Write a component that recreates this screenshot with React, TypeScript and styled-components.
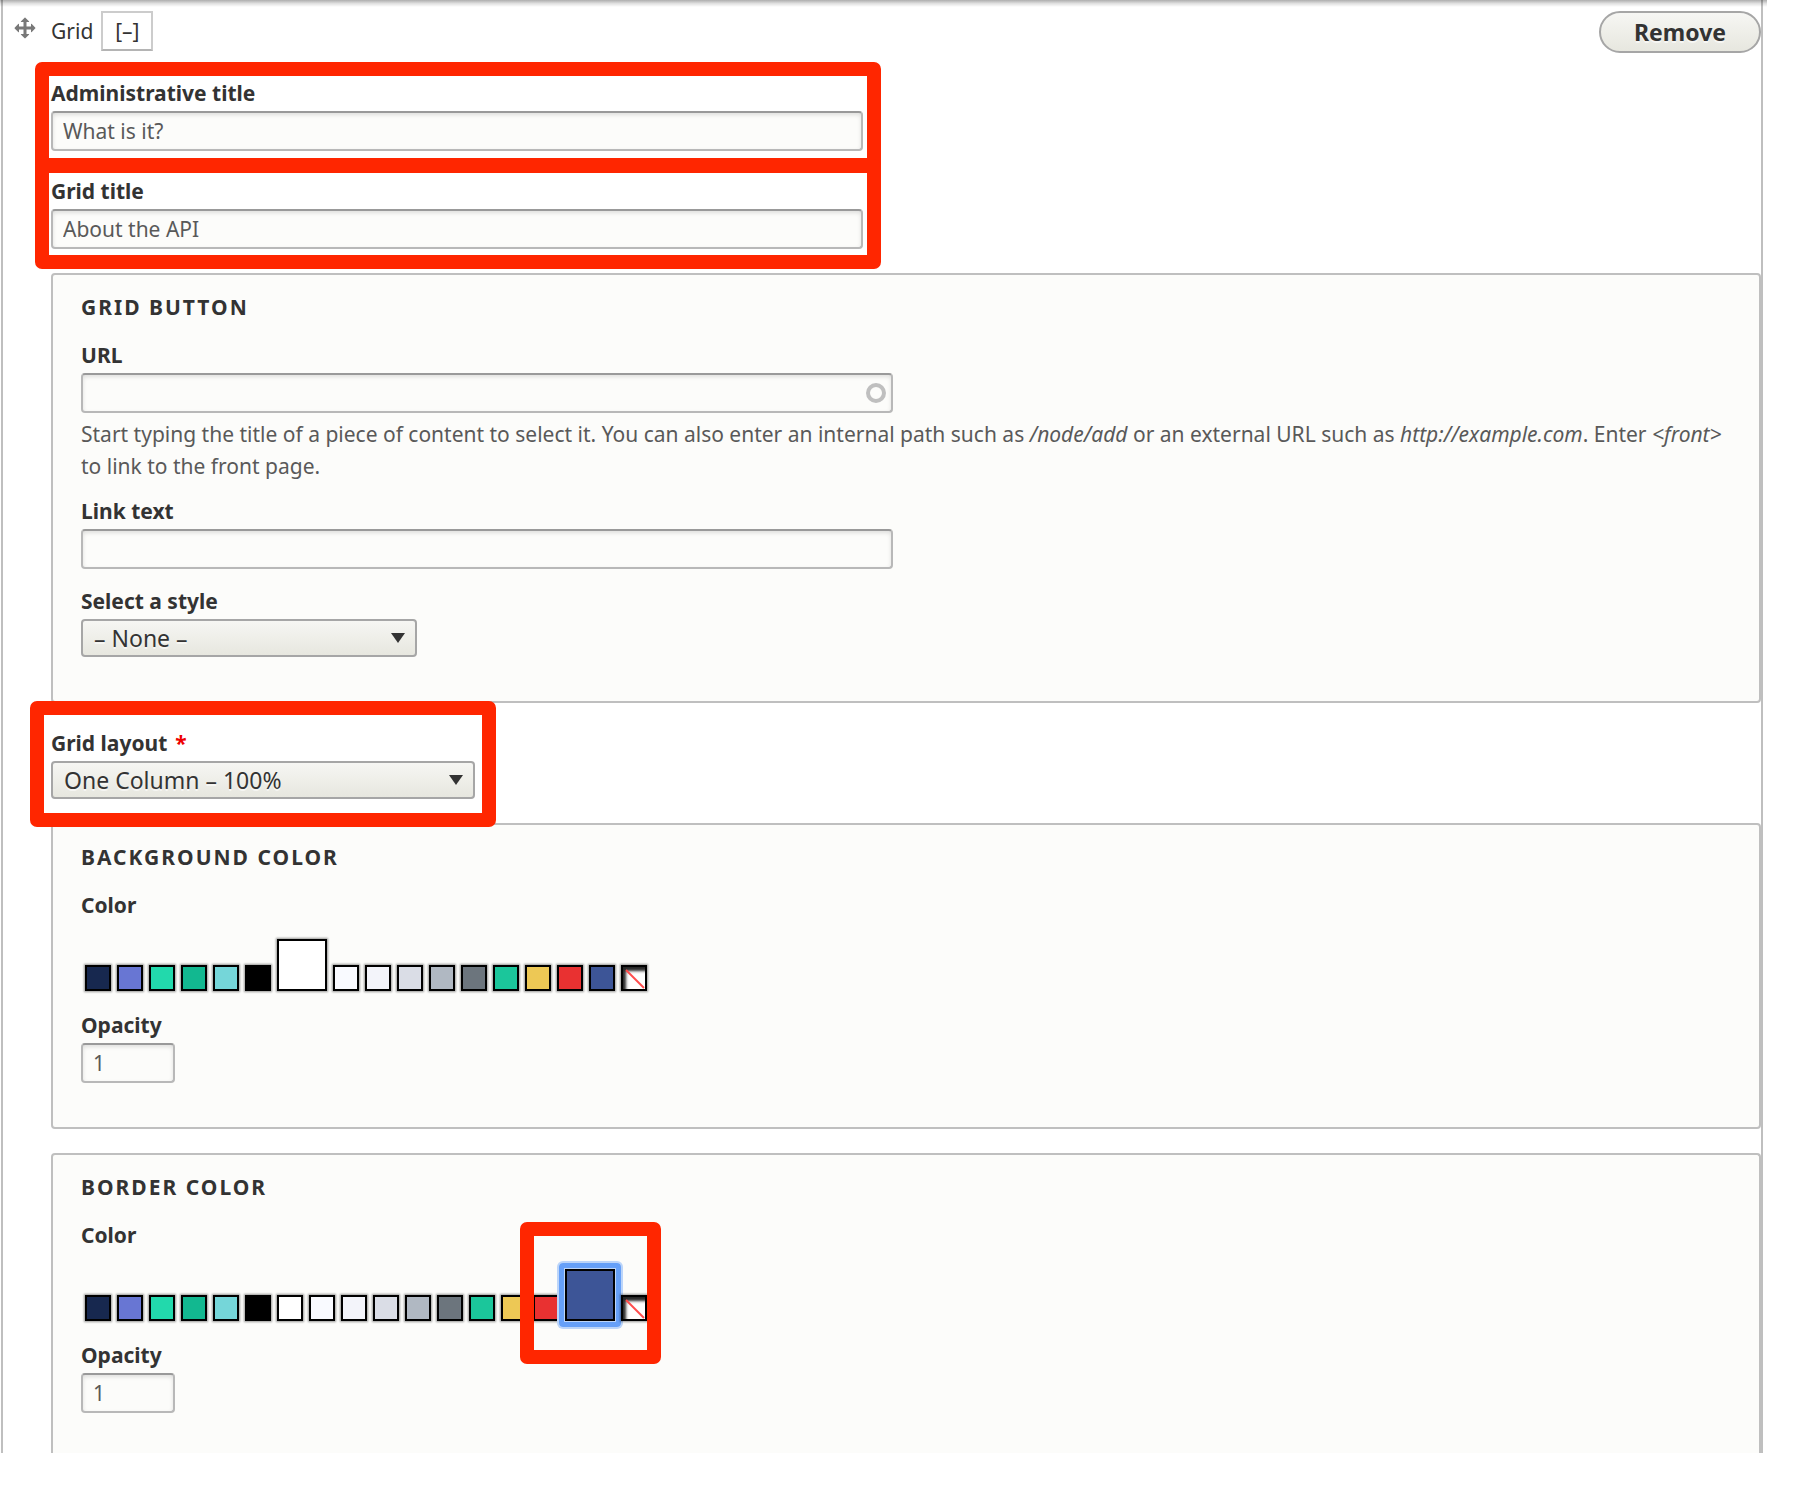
import React, { useState } from 'react';
import styled, { createGlobalStyle, css } from 'styled-components';

const ink = '#333333';
const line = '#bfbfbf';

const GlobalStyle = createGlobalStyle`
  *, *::before, *::after { box-sizing: border-box; }
  body {
    margin: 0;
    background: #ffffff;
    color: ${ink};
    font-family: "Noto Sans", "Open Sans", sans-serif;
    font-size: 21px;
    line-height: 32px;
  }
  button, input, select { font-family: inherit; margin: 0; }
`;

const Page = styled.main`
  position: relative;
  padding: 0 45px 0 1px;
`;

const ToolbarShadow = styled.div`
  position: absolute;
  z-index: 2;
  top: 0;
  left: 0;
  right: 41px;
  height: 7px;
  background: linear-gradient(rgba(0, 0, 0, 0.32), rgba(0, 0, 0, 0.12) 50%, rgba(0, 0, 0, 0));
  pointer-events: none;
`;

const Paragraph = styled.section`
  display: flex;
  flex-direction: column;
  gap: 24px;
  border: solid ${line};
  border-width: 0 2px;
  padding-top: 11px;
`;

const Header = styled.header`
  display: flex;
  align-items: flex-start;
  padding-left: 10px;
`;

const DragHandle = styled.a`
  display: flex;
  margin: 5px 14px 0 0;
  color: #787878;
  cursor: move;
`;

const TypeName = styled.span`
  line-height: 40px;
  margin-right: 8px;
`;

const CollapseButton = styled.button`
  width: 52px;
  height: 40px;
  padding: 0;
  border: 2px solid #cccccc;
  border-bottom-color: #b4b4b4;
  background: #ffffff;
  color: ${ink};
  font-size: 21px;
`;

const RemoveButton = styled.button`
  min-width: 162px;
  height: 42px;
  margin-left: auto;
  border: 2px solid #a6a6a6;
  border-radius: 21px;
  background: linear-gradient(#f6f6f3, #e7e7df);
  color: ${ink};
  font-size: 23px;
  font-weight: 700;
  text-shadow: 0 2px rgba(255, 255, 255, 0.6);
`;

const Content = styled.div`
  display: flex;
  flex-direction: column;
  gap: 24px;
  padding-left: 48px;
`;

const Group = styled.fieldset<{ $open?: boolean }>`
  display: flex;
  flex-direction: column;
  align-items: flex-start;
  gap: 16px;
  min-width: 0;
  margin: 0;
  padding: 16px 28px 44px;
  border: 2px solid ${line};
  border-radius: 4px;
  background: #fcfcfa;
  ${(p) =>
    p.$open &&
    css`
      padding-bottom: 40px;
      border-bottom: 0;
      border-radius: 4px 4px 0 0;
    `}
`;

const Legend = styled.legend`
  float: left;
  padding: 0;
  font-weight: 700;
  font-size: 21px;
  letter-spacing: 2px;
  text-transform: uppercase;
`;

const Field = styled.div<{ $wide?: boolean }>`
  position: relative;
  display: flex;
  flex-direction: column;
  align-items: flex-start;
  gap: 2px;
  align-self: flex-start;
  width: ${(p) => (p.$wide ? '812px' : 'auto')};
  max-width: 100%;
`;

const Label = styled.label`
  font-weight: 700;
`;

const Required = styled.span`
  margin-left: 8px;
  color: #ee0000;
`;

const TextInput = styled.input<{ $short?: boolean }>`
  width: ${(p) => (p.$short ? '94px' : '100%')};
  height: 40px;
  padding: 0 10px;
  border: 2px solid #b8b8b8;
  border-top-color: #999999;
  border-radius: 4px;
  outline: 0;
  background: #fcfcfa;
  box-shadow: inset 0 2px 4px rgba(0, 0, 0, 0.12);
  color: #595959;
  font-size: 21px;
`;

const InputWrap = styled.div`
  position: relative;
  display: flex;
  width: 100%;
`;

const Throbber = styled.span`
  position: absolute;
  top: 10px;
  right: 7px;
  width: 20px;
  height: 20px;
  border: 4px solid #bfbfbf;
  border-radius: 50%;
`;

const Description = styled.p`
  margin: 5px 0 -3px;
  color: #595959;
`;

const FieldWithHelp = styled.div`
  display: flex;
  flex-direction: column;
  align-self: stretch;
`;

const SelectWrap = styled.div<{ $width: number }>`
  position: relative;
  display: flex;
  width: ${(p) => p.$width}px;
`;

const Select = styled.select`
  width: 100%;
  height: 38px;
  padding: 0 36px 0 11px;
  border: 2px solid #a6a6a6;
  border-radius: 4px;
  appearance: none;
  background: linear-gradient(#f6f6f3, #e7e7df);
  color: ${ink};
  font-size: 23px;
  text-shadow: 0 2px rgba(255, 255, 255, 0.6);
`;

const Caret = styled.svg`
  position: absolute;
  top: 14px;
  right: 12px;
  pointer-events: none;
`;

const Swatches = styled.div`
  display: flex;
  align-items: flex-end;
  gap: 6px;
  padding: 16px 4px 2px;
`;

const SwatchSlot = styled.span`
  position: relative;
  display: flex;
`;

const Swatch = styled.button<{ $color: string; $active: boolean; $focused: boolean }>`
  position: relative;
  display: flex;
  width: ${(p) => (p.$active ? '50px' : '26px')};
  height: ${(p) => (p.$active ? '52px' : '26px')};
  padding: 0;
  border: 2px solid #000000;
  background: ${(p) => p.$color};
  box-shadow: 0 0 2px 1px rgba(0, 0, 0, 0.4);
  outline: 0;
  ${(p) =>
    p.$focused &&
    css`
      &::after {
        content: '';
        position: absolute;
        inset: -8px;
        border: 5px solid #66a0f8;
        border-radius: 4px;
        box-shadow: 0 0 0 2px #bcd5f9, inset 0 0 0 1px #bcd5f9;
      }
    `}
`;

const NoColor = styled.svg`
  width: 22px;
  height: 22px;
  box-shadow: inset 3px 4px 3px rgba(0, 0, 0, 0.85);
`;

const Highlight = styled.span<{ $inset: string }>`
  position: absolute;
  z-index: 1;
  inset: ${(p) => p.$inset};
  border: 14px solid #ff2600;
  border-radius: 7px;
  pointer-events: none;
`;

const palette: [string, string][] = [
  ['Navy', '#17284f'],
  ['Periwinkle', '#6876d3'],
  ['Mint', '#22d9ac'],
  ['Green', '#12b890'],
  ['Aqua', '#75d6d9'],
  ['Black', '#000000'],
  ['White', '#ffffff'],
  ['Ghost white', '#f9faff'],
  ['Pale gray', '#f3f4fa'],
  ['Light gray', '#dadde6'],
  ['Gray', '#b0b8c2'],
  ['Slate', '#6c757d'],
  ['Teal', '#1bc69b'],
  ['Yellow', '#edc855'],
  ['Red', '#e93131'],
  ['Blue', '#3d5597'],
  ['No color', '#ffffff'],
];

function ColorGroup(props: { id: string; title: string; initial: string; marked?: boolean; open?: boolean }) {
  const [selected, setSelected] = useState(props.initial);
  return (
    <Group $open={props.open}>
      <Legend>{props.title}</Legend>
      <Field>
        <Label as="span" id={`${props.id}-color`}>Color</Label>
        <Swatches role="group" aria-labelledby={`${props.id}-color`}>
          {palette.map(([name, color]) => {
            const active = name === selected;
            return (
              <SwatchSlot key={name}>
                <Swatch
                  type="button"
                  aria-label={name}
                  aria-pressed={active}
                  $color={color}
                  $active={active}
                  $focused={active && Boolean(props.marked)}
                  onClick={() => setSelected(name)}
                >
                  {name === 'No color' && (
                    <NoColor viewBox="0 0 22 22" aria-hidden="true">
                      <path d="M3 3 21 21" stroke="#ff4d4d" strokeWidth="2" />
                    </NoColor>
                  )}
                </Swatch>
                {active && props.marked && <Highlight $inset="-47px -46px -43px -45px" />}
              </SwatchSlot>
            );
          })}
        </Swatches>
      </Field>
      <Field>
        <Label htmlFor={`${props.id}-opacity`}>Opacity</Label>
        <TextInput id={`${props.id}-opacity`} $short defaultValue="1" />
      </Field>
    </Group>
  );
}

function SelectBox(props: { id: string; width: number; option: string }) {
  return (
    <SelectWrap $width={props.width}>
      <Select id={props.id}>
        <option>{props.option}</option>
      </Select>
      <Caret width="14" height="10" viewBox="0 0 14 10" aria-hidden="true">
        <path d="M0 0h14L7 10z" fill={ink} />
      </Caret>
    </SelectWrap>
  );
}

export default function App() {
  return (
    <>
      <GlobalStyle />
      <Page>
        <ToolbarShadow />
        <Paragraph>
          <Header>
            <DragHandle href="#" aria-label="Drag to re-order">
              <svg width="24" height="24" viewBox="0 0 16 16" fill="currentColor" aria-hidden="true">
                <path d="M14.904 7.753l-2.373-2.372c-.291-.292-.529-.193-.529.22v1.399h-3v-3h1.398c.413 0 .512-.239.221-.53l-2.371-2.372c-.137-.136-.36-.136-.497 0l-2.372 2.372c-.292.292-.193.53.22.53h1.399v3h-3v-1.369c0-.413-.239-.511-.53-.22l-2.372 2.372c-.136.136-.136.359 0 .494l2.372 2.372c.291.292.53.193.53-.22v-1.43h3v3h-1.4c-.413 0-.511.238-.22.529l2.374 2.373c.137.137.36.137.495 0l2.373-2.373c.29-.291.19-.529-.222-.529h-1.398v-3h3v1.4c0 .412.238.511.529.219l2.373-2.371c.137-.137.137-.359 0-.496z" />
              </svg>
            </DragHandle>
            <TypeName>Grid</TypeName>
            <CollapseButton type="button">[–]</CollapseButton>
            <RemoveButton type="button">Remove</RemoveButton>
          </Header>

          <Content>
            <Field $wide>
              <Label htmlFor="admin-title">Administrative title</Label>
              <TextInput id="admin-title" defaultValue="What is it?" />
              <Highlight $inset="-15px -18px -21px -16px" />
            </Field>

            <Field $wide>
              <Label htmlFor="grid-title">Grid title</Label>
              <TextInput id="grid-title" defaultValue="About the API" />
              <Highlight $inset="-16px -18px -20px -16px" />
            </Field>

            <Group>
              <Legend>Grid button</Legend>
              <FieldWithHelp>
                <Field $wide>
                  <Label htmlFor="url">URL</Label>
                  <InputWrap>
                    <TextInput id="url" />
                    <Throbber />
                  </InputWrap>
                </Field>
                <Description>
                  Start typing the title of a piece of content to select it. You can also enter an internal path such
                  as <em>/node/add</em> or an external URL such as <em>http://example.com</em>. Enter{' '}
                  <em>&lt;front&gt;</em> to link to the front page.
                </Description>
              </FieldWithHelp>
              <Field $wide>
                <Label htmlFor="link-text">Link text</Label>
                <TextInput id="link-text" />
              </Field>
              <Field>
                <Label htmlFor="style">Select a style</Label>
                <SelectBox id="style" width={336} option="– None –" />
              </Field>
            </Group>

            <Field>
              <Label htmlFor="layout">
                Grid layout<Required>*</Required>
              </Label>
              <SelectBox id="layout" width={424} option="One Column – 100%" />
              <Highlight $inset="-26px -21px -28px -21px" />
            </Field>

            <ColorGroup id="background" title="Background color" initial="White" />
            <ColorGroup id="border" title="Border color" initial="Blue" marked open />
          </Content>
        </Paragraph>
      </Page>
    </>
  );
}
